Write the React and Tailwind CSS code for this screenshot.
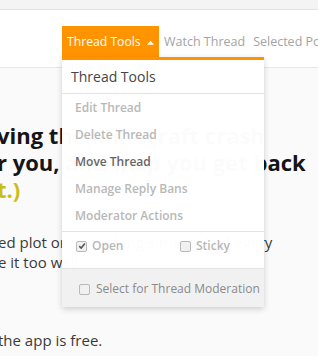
import React from 'react';

function Check({ checked }) {
    return (
        <span className="inline-flex h-[11px] w-[11px] shrink-0 items-center justify-center rounded-[2px] border border-[#b9b9b9] bg-[#f1f1f1]">
            {checked && (
                <svg viewBox="0 0 10 10" className="h-[8px] w-[8px]">
                    <path d="M1.5 5.2 L4 7.6 L8.6 1.8" fill="none" stroke="#555" strokeWidth="1.9" />
                </svg>
            )}
        </span>
    );
}

export default function App() {
    const items = [
        { label: 'Edit Thread', dark: false },
        { label: 'Delete Thread', dark: false },
        { label: 'Move Thread', dark: true },
        { label: 'Manage Reply Bans', dark: false },
        { label: 'Moderator Actions', dark: false },
    ];

    return (
        <div className="relative h-[356px] w-[318px] overflow-hidden bg-[#fafafa] font-['Open_Sans',sans-serif]">
            <div className="h-[10px] border-b border-[#e2e2e2] bg-[#f4f4f4]" />
            <div className="flex h-[58px] items-start border-b border-[#e6e6e6] bg-white pl-[62px] pt-[16px]">
                <div className="flex h-[32px] w-[97px] shrink-0 items-center gap-[6px] whitespace-nowrap bg-[#ff9400] pl-[5px] text-[12.2px] text-white">
                    <span>Thread Tools</span>
                    <svg viewBox="0 0 8 5" className="h-[5px] w-[7px]">
                        <path d="M0 5 L4 0.5 L8 5 Z" fill="white" />
                    </svg>
                </div>
                <div className="flex h-[32px] shrink-0 items-center gap-[8px] whitespace-nowrap pl-[5px] text-[12.5px] text-[#a3a3a3]">
                    <span>Watch Thread</span>
                    <span>Selected Posts</span>
                </div>
            </div>

            <div className="-ml-[3px] mt-[54px] whitespace-nowrap text-[22px] font-bold leading-[27px] text-[#151515]">
                <div>ving the Minecraft crash</div>
                <div>r you, and help you get back</div>
                <div className="text-[#c9bd16]">t.)</div>
            </div>
            <div className="-ml-[2px] mt-[29px] whitespace-nowrap text-[15px] leading-[20px] text-[#3a3a3a]">
                <div>ed plot or something similar. And every</div>
                <div>e it too well.</div>
                <div className="mt-[58px]">the app is free.</div>
            </div>

            <div className="absolute left-[62px] top-[57px] w-[202px] border-t-[3px] border-[#ff9400] bg-white/[0.985] shadow-[0_2px_6px_rgba(0,0,0,0.18)]">
                <div className="border-b border-[#e3e3e3] px-[9px] pb-[6px] pt-[6px] text-[14px] text-[#444]">Thread Tools</div>
                <div className="pb-[2px]">
                    {items.map((it) => (
                        <div
                            key={it.label}
                            className={`px-[13px] text-[12px] font-semibold leading-[27px] ${it.dark ? 'text-[#666]' : 'text-[#b8b8b8]'}`}
                        >
                            {it.label}
                        </div>
                    ))}
                </div>
                <div className="flex h-[37px] items-start border-t border-[#e3e3e3] pl-[14px] pt-[5px] text-[12px] font-semibold text-[#b8b8b8]">
                    <div className="flex w-[104px] items-center gap-[5px]">
                        <Check checked />
                        <span>Open</span>
                    </div>
                    <div className="flex items-center gap-[5px]">
                        <Check />
                        <span>Sticky</span>
                    </div>
                </div>
                <div className="flex h-[39px] items-center gap-[6px] border-t border-[#e3e3e3] bg-[#f1f1f1] pl-[17px] pt-[2px] text-[12px] text-[#8a8a8a]">
                    <Check />
                    <span>Select for Thread Moderation</span>
                </div>
            </div>
        </div>
    );
}
